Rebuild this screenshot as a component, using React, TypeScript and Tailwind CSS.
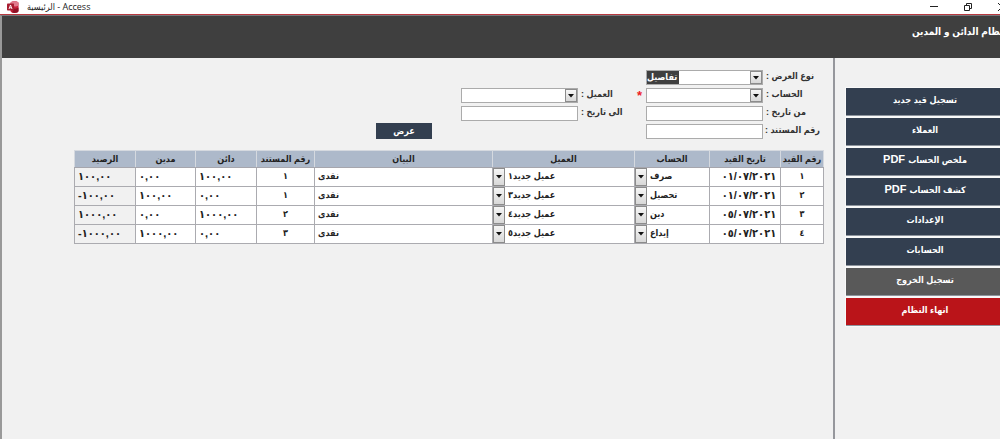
import type { ReactNode } from "react";

const accounts = ["صرف", "تحصيل", "دين", "إيداع"];
const clients = ["عميل جديد١", "عميل جديد٣", "عميل جديد٤", "عميل جديد٥"];

const entries = [
  { id: "١", date: "٠١/٠٧/٢٠٢١", account: "صرف", client: "عميل جديد١", note: "نقدى", doc: "١", credit: "١٠٠,٠٠", debit: "٠,٠٠", balance: "١٠٠,٠٠" },
  { id: "٢", date: "٠١/٠٧/٢٠٢١", account: "تحصيل", client: "عميل جديد٣", note: "نقدى", doc: "١", credit: "٠,٠٠", debit: "١٠٠,٠٠", balance: "-١٠٠,٠٠" },
  { id: "٣", date: "٠٥/٠٧/٢٠٢١", account: "دين", client: "عميل جديد٤", note: "نقدى", doc: "٢", credit: "١٠٠٠,٠٠", debit: "٠,٠٠", balance: "١٠٠٠,٠٠" },
  { id: "٤", date: "٠٥/٠٧/٢٠٢١", account: "إيداع", client: "عميل جديد٥", note: "نقدى", doc: "٣", credit: "٠,٠٠", debit: "١٠٠٠,٠٠", balance: "-١٠٠٠,٠٠" },
];

const columns = [
  { name: "رقم القيد", width: "w-[43px]" },
  { name: "تاريخ القيد", width: "w-[71px]" },
  { name: "الحساب", width: "w-[75px]" },
  { name: "العميل", width: "w-[142px]" },
  { name: "البيان", width: "w-auto" },
  { name: "رقم المستند", width: "w-[58px]" },
  { name: "دائن", width: "w-[61px]" },
  { name: "مدين", width: "w-[60px]" },
  { name: "الرصيد", width: "w-[61px]" },
];

const menu = [
  { label: "تسجيل قيد جديد", color: "bg-[#333f50]" },
  { label: "العملاء", color: "bg-[#333f50]" },
  { label: "ملخص الحساب", suffix: "PDF", color: "bg-[#333f50]" },
  { label: "كشف الحساب", suffix: "PDF", color: "bg-[#333f50]" },
  { label: "الإعدادات", color: "bg-[#333f50]" },
  { label: "الحسابات", color: "bg-[#333f50]" },
  { label: "تسجيل الخروج", color: "bg-[#595959]" },
  { label: "انهاء النظام", color: "bg-[#ba1419]" },
];

const Arrow = () => (
  <span className="pointer-events-none flex w-3 shrink-0 items-center justify-center border border-[#8c8c8c] bg-linear-to-b from-[#f6f6f6] to-[#d8d8d8]">
    <svg viewBox="0 0 6 4" className="h-1 w-1.5">
      <path d="M0 0h6L3 3.5z" fill="#111" />
    </svg>
  </span>
);

const Row = ({ id, label, children }: { id: string; label: string; children: ReactNode }) => (
  <div className="flex h-[15px] items-center gap-[3px]">
    <label htmlFor={id} className="w-[54px] whitespace-nowrap pb-0.5 text-left">
      {label}
    </label>
    {children}
  </div>
);

const TextBox = ({ id }: { id: string }) => (
  <input id={id} type="text" className="h-[15px] w-[117px] border border-[#ababab] bg-white px-1 outline-none" />
);

const ComboBox = ({ id, options, selected }: { id: string; options: string[]; selected?: boolean }) => (
  <div dir="ltr" className="flex h-[15px] w-[117px] border border-[#ababab] bg-white">
    <div className="flex min-w-0 flex-1">
      <select
        id={id}
        className={
          selected
            ? "h-full w-8 appearance-none bg-[#3f3f3f] pb-0.5 text-left leading-3 text-white outline-none"
            : "h-full w-full appearance-none bg-white outline-none"
        }
      >
        {options.map((o) => (
          <option key={o}>{o}</option>
        ))}
      </select>
    </div>
    <Arrow />
  </div>
);

const CellCombo = ({ label, value, options }: { label: string; value: string; options: string[] }) => (
  <div dir="ltr" className="flex h-[18px]">
    <Arrow />
    <select
      aria-label={label}
      defaultValue={value}
      className="h-full min-w-0 flex-1 appearance-none bg-white pb-1 pl-[3px] text-left font-bold leading-4 outline-none"
    >
      {options.map((o) => (
        <option key={o}>{o}</option>
      ))}
    </select>
  </div>
);

const TitleBar = () => (
  <div className="flex h-[14px] items-center justify-between overflow-hidden bg-white pl-[7px]">
    <div className="flex items-center gap-2">
      <svg viewBox="0 0 24 24" className="size-3">
        <path d="M7 4c0-5 16-5 16 0v16c0 5-16 5-16 0z" fill="#c8213b" />
        <path d="M7 4c0-5 16-5 16 0v5c-5 3-11 2-16-1z" fill="#e07a8c" />
        <path d="M14 15c3 1 7 0 9-2v7c0 4-9 5-13 3z" fill="#8f1125" />
        <rect x="0" y="5" width="14" height="14" rx="1.5" fill="#a81c30" />
        <path d="M4 16 7 8l3 8M5 13.500h4" fill="none" stroke="#fff" strokeWidth="1.800" />
      </svg>
      <span className="whitespace-nowrap font-['Open_Sans','DejaVu_Sans_Condensed','DejaVu_Sans',sans-serif] text-[9px] font-normal leading-3 text-[#222]">
        الرئيسية - Access
      </span>
    </div>
    <div className="flex items-center gap-[26px] text-[#222]">
      <button aria-label="تصغير" className="w-2">
        <svg viewBox="0 0 8 8" className="size-2">
          <path d="M0 3.500h8" stroke="currentColor" />
        </svg>
      </button>
      <button aria-label="استعادة" className="w-2">
        <svg viewBox="0 0 8 8" className="size-2 overflow-visible">
          <path d="M.5 2.500h5v5h-5zM2.500 2.500v-2h5v5h-2" fill="none" stroke="currentColor" />
        </svg>
      </button>
      <button aria-label="إغلاق" className="w-0.5 overflow-hidden">
        <svg viewBox="0 0 8 8" className="size-2">
          <path d="m0 0 8 8M8 0 0 8" stroke="currentColor" />
        </svg>
      </button>
    </div>
  </div>
);

const Entries = () => (
  <table dir="rtl" className="w-full table-fixed border-collapse text-[#222]">
    <thead>
      <tr className="h-[17px] bg-[#adb9ca]">
        {columns.map((c) => (
          <th
            key={c.name}
            className={`${c.width} whitespace-nowrap border border-[#d5d9df] border-b-[#a6a6ad] p-0 text-center leading-4`}
          >
            {c.name}
          </th>
        ))}
      </tr>
    </thead>
    <tbody>
      {entries.map((e) => (
        <tr
          key={e.id}
          className="h-[19px] bg-white *:whitespace-nowrap *:border *:border-[#ababb0] *:p-0 *:align-top *:leading-4"
        >
          <td className="text-center">{e.id}</td>
          <td className="text-center text-[11px]">
            <span className="pl-2">{e.date}</span>
          </td>
          <td>
            <CellCombo label="الحساب" value={e.account} options={accounts} />
          </td>
          <td>
            <CellCombo label="العميل" value={e.client} options={clients} />
          </td>
          <td className="text-left">
            <span className="pl-[3px]">{e.note}</span>
          </td>
          <td className="text-center">{e.doc}</td>
          <td dir="ltr" className="text-left text-[11px]">
            <span className="pl-[3px]">{e.credit}</span>
          </td>
          <td dir="ltr" className="text-left text-[11px]">
            <span className="pl-[3px]">{e.debit}</span>
          </td>
          <td dir="ltr" className="bg-[#f1f1f1] text-left text-[11px]">
            <span className="pl-[3px]">{e.balance}</span>
          </td>
        </tr>
      ))}
    </tbody>
  </table>
);

export default function App() {
  return (
    <div className="flex min-h-screen flex-col overflow-hidden bg-[#f1f1f1] font-['Liberation_Sans','DejaVu_Sans_Condensed','DejaVu_Sans',sans-serif] text-[9px] font-bold text-[#333]">
      <TitleBar />
      <div className="flex flex-1 flex-col border-t border-t-[#b8393f]">
        <div className="flex flex-1 flex-col border-l-2 border-t border-l-[#999] border-t-[#77777b]">
          <header className="flex h-[42px] justify-end overflow-hidden bg-[#3f3f3f] pt-2">
            <h1 dir="ltr" className="w-[88px] whitespace-nowrap text-[10px] leading-4 text-white">
              نظام الدائن و المدين
            </h1>
          </header>
          <div className="flex flex-1">
            <main className="min-w-0 flex-1 border-r-2 border-r-[#96979c] pl-[72px] pr-[9px] pt-3">
              <form dir="rtl" className="flex items-start pr-1" onSubmit={(e) => e.preventDefault()}>
                <div className="flex flex-col gap-[3px]">
                  <Row id="view" label="نوع العرض :">
                    <ComboBox id="view" options={["تفاصيل"]} selected />
                  </Row>
                  <Row id="account" label="الحساب :">
                    <ComboBox id="account" options={["", ...accounts]} />
                  </Row>
                  <Row id="from" label="من تاريخ :">
                    <TextBox id="from" />
                  </Row>
                  <Row id="doc" label="رقم المستند :">
                    <TextBox id="doc" />
                  </Row>
                </div>
                <span className="mr-1 mt-4 w-[7px] text-[13px] leading-5 text-[#ee1c25]">*</span>
                <div className="mt-[18px] flex flex-col gap-[3px]">
                  <Row id="client" label="العميل :">
                    <ComboBox id="client" options={["", ...clients]} />
                  </Row>
                  <Row id="to" label="الى  تاريخ :">
                    <TextBox id="to" />
                  </Row>
                </div>
                <button className="mr-[29px] mt-[53px] h-4 w-14 bg-[#333f50] text-[9px] leading-4 text-white">عرض</button>
              </form>
              <div className="mt-[11px]">
                <Entries />
              </div>
            </main>
            <nav dir="rtl" className="flex w-[165px] flex-col gap-0.5 pl-[11px] pt-[30px]">
              {menu.map((m) => (
                <button
                  key={m.label}
                  className={`${m.color} h-7 whitespace-nowrap border-b border-b-[#8d949d] pb-1 pl-1 leading-4 text-white ring-1 ring-white/60`}
                >
                  {m.label}
                  {m.suffix && <span className="text-[11px]"> {m.suffix}</span>}
                </button>
              ))}
            </nav>
          </div>
        </div>
      </div>
    </div>
  );
}
